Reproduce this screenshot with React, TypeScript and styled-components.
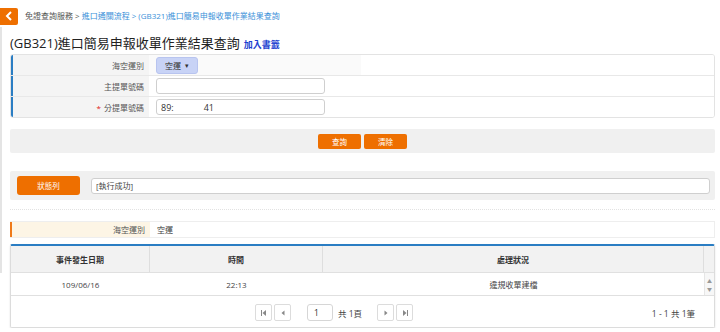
import styled, { createGlobalStyle } from "styled-components";

const GlobalStyle = createGlobalStyle`
    body {
        margin: 0;
        background: #fff;
        font-family: "Open Sans", "Noto Sans CJK TC", sans-serif;
        font-size: 8px;
        color: #333;
    }
    * {
        box-sizing: border-box;
    }
`;

const orange = "#ee6f00";
const blue = "#2a7dc3";

export default function App() {
    return (
        <>
            <GlobalStyle/>
            <TopBar>
                <BackButton>
                    <svg width="8" height="10" viewBox="0 0 8 10">
                        <path d="M6 1 L2 5 L6 9" stroke="#fff" strokeWidth="2" fill="none"/>
                    </svg>
                </BackButton>
                <Crumbs>
                    <CrumbPlain>免證查詢服務 &gt;</CrumbPlain>
                    <CrumbLink>進口通關流程 &gt;</CrumbLink>
                    <CrumbLink>(GB321)進口簡易申報收單作業結果查詢</CrumbLink>
                </Crumbs>
            </TopBar>
            <Body>
                <Rail/>
                <Content>
                    <TitleRow>
                        <Title>(GB321)進口簡易申報收單作業結果查詢</Title>
                        <Bookmark>加入書籤</Bookmark>
                    </TitleRow>

                    <FormPanel>
                        <FormRow $tall>
                            <Label $bar={blue} $bg="#f4f4f4">海空運別</Label>
                            <Value $shade>
                                <SelectButton>空運 <Caret>▾</Caret></SelectButton>
                            </Value>
                        </FormRow>
                        <FormRow $tall>
                            <Label $bar={blue} $bg="#f4f4f4">主提單號碼</Label>
                            <Value>
                                <TextBox/>
                            </Value>
                        </FormRow>
                        <FormRow $last>
                            <Label $bar={blue} $bg="#f4f4f4"><Required>*</Required>分提單號碼</Label>
                            <Value>
                                <TextBox>89:<Masked/>41</TextBox>
                            </Value>
                        </FormRow>
                    </FormPanel>

                    <ActionBar>
                        <OrangeButton>查詢</OrangeButton>
                        <OrangeButton>清除</OrangeButton>
                    </ActionBar>

                    <StatusBar>
                        <StatusButton>狀態列</StatusButton>
                        <StatusText>[執行成功]</StatusText>
                    </StatusBar>

                    <Divider/>

                    <ResultRow>
                        <Label $bar="#ef7a1a" $bg="#fdf5e5">海空運別</Label>
                        <Value>空運</Value>
                    </ResultRow>

                    <TablePanel>
                        <HeadRow>
                            <HeadCell>事件發生日期</HeadCell>
                            <HeadCell>時間</HeadCell>
                            <HeadCell>處理狀況</HeadCell>
                            <HeadCell/>
                        </HeadRow>
                        <DataRow>
                            <DataCell>109/06/16</DataCell>
                            <DataCell>22:13</DataCell>
                            <DataCell>違規收單建檔</DataCell>
                            <ScrollCell>
                                <span>▲</span>
                                <span>▼</span>
                            </ScrollCell>
                        </DataRow>
                        <Pager>
                            <PageGroup>
                                <PageButton>
                                    <svg width="6" height="6" viewBox="0 0 6 6"><rect x="0" y="0" width="1" height="6" fill="#888"/><path d="M5 0 L1.5 3 L5 6 Z" fill="#888"/></svg>
                                </PageButton>
                                <PageButton>
                                    <svg width="6" height="6" viewBox="0 0 6 6"><path d="M4.5 0.5 L1.5 3 L4.5 5.5 Z" fill="#888"/></svg>
                                </PageButton>
                                <PageInput>1</PageInput>
                                <PageTotal>共 1頁</PageTotal>
                                <PageButton>
                                    <svg width="6" height="6" viewBox="0 0 6 6"><path d="M1.5 0.5 L4.5 3 L1.5 5.5 Z" fill="#888"/></svg>
                                </PageButton>
                                <PageButton>
                                    <svg width="6" height="6" viewBox="0 0 6 6"><path d="M1 0 L4.5 3 L1 6 Z" fill="#888"/><rect x="5" y="0" width="1" height="6" fill="#888"/></svg>
                                </PageButton>
                            </PageGroup>
                            <Summary>1 - 1 共 1筆</Summary>
                        </Pager>
                    </TablePanel>
                </Content>
            </Body>
        </>
    );
}

const TopBar = styled.div`
    display: flex;
    align-items: center;
    gap: 7px;
    height: 22px;
    margin-top: 5px;
`;

const BackButton = styled.div`
    width: 18px;
    height: 17px;
    background: ${orange};
    border-radius: 0 2px 2px 0;
    display: flex;
    align-items: center;
    justify-content: center;
`;

const Crumbs = styled.div`
    font-size: 8px;
    line-height: 14px;
    display: flex;
    gap: 2px;
`;

const CrumbPlain = styled.span`
    color: #555;
`;

const CrumbLink = styled.span`
    color: #3b91d9;
`;

const Body = styled.div`
    display: flex;
    align-items: flex-start;
`;

const Rail = styled.div`
    width: 2px;
    height: 246px;
    background: #e4e4e4;
    flex-shrink: 0;
`;

const Content = styled.div`
    width: 705px;
    margin-left: 8px;
    display: flex;
    flex-direction: column;
`;

const TitleRow = styled.div`
    display: flex;
    align-items: baseline;
    gap: 4px;
    height: 27px;
    padding-top: 5px;
`;

const Title = styled.h1`
    margin: 0;
    font-size: 13px;
    line-height: 22px;
    font-weight: 400;
    color: #222;
`;

const Bookmark = styled.a`
    font-size: 9px;
    font-weight: 700;
    color: #1b3fd0;
`;

const FormPanel = styled.div`
    border: 1px solid #e3e3e3;
    border-radius: 3px;
    overflow: hidden;
`;

const FormRow = styled.div<{ $tall?: boolean; $last?: boolean }>`
    display: grid;
    grid-template-columns: 138px 1fr;
    height: ${p => (p.$tall ? 21 : 20)}px;
    border-bottom: ${p => (p.$last ? "none" : "1px solid #e8e8e8")};
`;

const Label = styled.div<{ $bar: string; $bg: string }>`
    border-left: 2px solid ${p => p.$bar};
    background: ${p => p.$bg};
    display: flex;
    align-items: center;
    justify-content: flex-end;
    padding-right: 5px;
    font-size: 8px;
    color: #555;
`;

const Required = styled.span`
    color: #e02020;
    margin-right: 3px;
`;

const Value = styled.div<{ $shade?: boolean }>`
    display: flex;
    align-items: center;
    padding-left: 7px;
    font-size: 8px;
    color: #444;
    background: ${p => (p.$shade ? "linear-gradient(to right, #fafafa 212px, #fff 212px)" : "#fff")};
`;

const SelectButton = styled.div`
    width: 42px;
    height: 17px;
    background: #c8d3f6;
    border: 1px solid #b8c4ef;
    border-radius: 3px;
    font-size: 8px;
    color: #333;
    display: flex;
    align-items: center;
    justify-content: center;
    gap: 4px;
`;

const Caret = styled.span`
    font-size: 7px;
`;

const TextBox = styled.div`
    width: 169px;
    height: 16px;
    border: 1px solid #cfcfcf;
    border-radius: 3px;
    background: #fff;
    font-size: 9px;
    color: #333;
    padding-left: 4px;
    display: flex;
    align-items: center;
`;

const Masked = styled.span`
    display: inline-block;
    width: 30px;
`;

const ActionBar = styled.div`
    margin-top: 11px;
    height: 24px;
    background: #f0f0f0;
    border-radius: 2px;
    display: flex;
    justify-content: center;
    align-items: center;
    gap: 3px;
`;

const OrangeButton = styled.div`
    width: 43px;
    height: 15px;
    background: ${orange};
    border-radius: 2px;
    color: #fff;
    font-size: 7.5px;
    display: flex;
    align-items: center;
    justify-content: center;
`;

const StatusBar = styled.div`
    margin-top: 18px;
    height: 29px;
    background: #f0f0f0;
    border-radius: 2px;
    display: flex;
    align-items: center;
    padding: 0 5px 0 7px;
    gap: 11px;
`;

const StatusButton = styled(OrangeButton)`
    width: 63px;
    height: 19px;
    border-radius: 3px;
`;

const StatusText = styled(TextBox)`
    flex: 1;
    width: auto;
    height: 16px;
    font-size: 8px;
    color: #444;
`;

const Divider = styled.div`
    margin-top: 9px;
    border-top: 1px dotted #e2e2e2;
`;

const ResultRow = styled.div`
    margin-top: 11px;
    height: 17px;
    display: grid;
    grid-template-columns: 140px 1fr;
    border: 1px solid #eeeeee;
    border-left: none;
`;

const TablePanel = styled.div`
    margin-top: 6px;
    border: 1px solid #dcdcdc;
    border-top: 2px solid ${blue};
    border-radius: 2px;
    box-shadow: 0 1px 2px rgba(0, 0, 0, 0.12);
`;

const columns = "139px 173px 381px 1fr";

const HeadRow = styled.div`
    display: grid;
    grid-template-columns: ${columns};
    height: 27px;
    background: #f2f2f2;
    border-bottom: 1px solid #e0e0e0;
`;

const HeadCell = styled.div`
    display: flex;
    align-items: center;
    justify-content: center;
    font-size: 8px;
    font-weight: 700;
    color: #333;
    border-right: 1px solid #dedede;

    &:last-child {
        border-right: none;
    }
`;

const DataRow = styled.div`
    display: grid;
    grid-template-columns: ${columns};
    height: 23px;
    border-bottom: 1px solid #e0e0e0;
`;

const DataCell = styled.div`
    display: flex;
    align-items: center;
    justify-content: center;
    font-size: 8px;
    color: #444;
`;

const ScrollCell = styled.div`
    display: flex;
    flex-direction: column;
    align-items: center;
    justify-content: space-between;
    padding: 5px 0 3px;
    background: #f7f7f7;
    border-left: 1px solid #e6e6e6;
    font-size: 5px;
    line-height: 6px;
    color: #999;
`;

const Pager = styled.div`
    height: 31px;
    display: flex;
    align-items: center;
    padding: 2px 19px 0 244px;
`;

const PageGroup = styled.div`
    display: flex;
    align-items: center;
    gap: 2px;
`;

const PageButton = styled.div`
    width: 17px;
    height: 17px;
    border: 1px solid #dcdcdc;
    border-radius: 2px;
    background: #fff;
    display: flex;
    align-items: center;
    justify-content: center;
`;

const PageInput = styled.div`
    width: 26px;
    height: 17px;
    margin-left: 14px;
    border: 1px solid #d6d6d6;
    border-radius: 3px;
    font-size: 8.5px;
    color: #333;
    padding-left: 6px;
    display: flex;
    align-items: center;
`;

const PageTotal = styled.span`
    font-size: 8.5px;
    color: #444;
    margin: 0 13px 0 3px;
`;

const Summary = styled.span`
    margin-left: auto;
    font-size: 8.5px;
    color: #444;
`;
